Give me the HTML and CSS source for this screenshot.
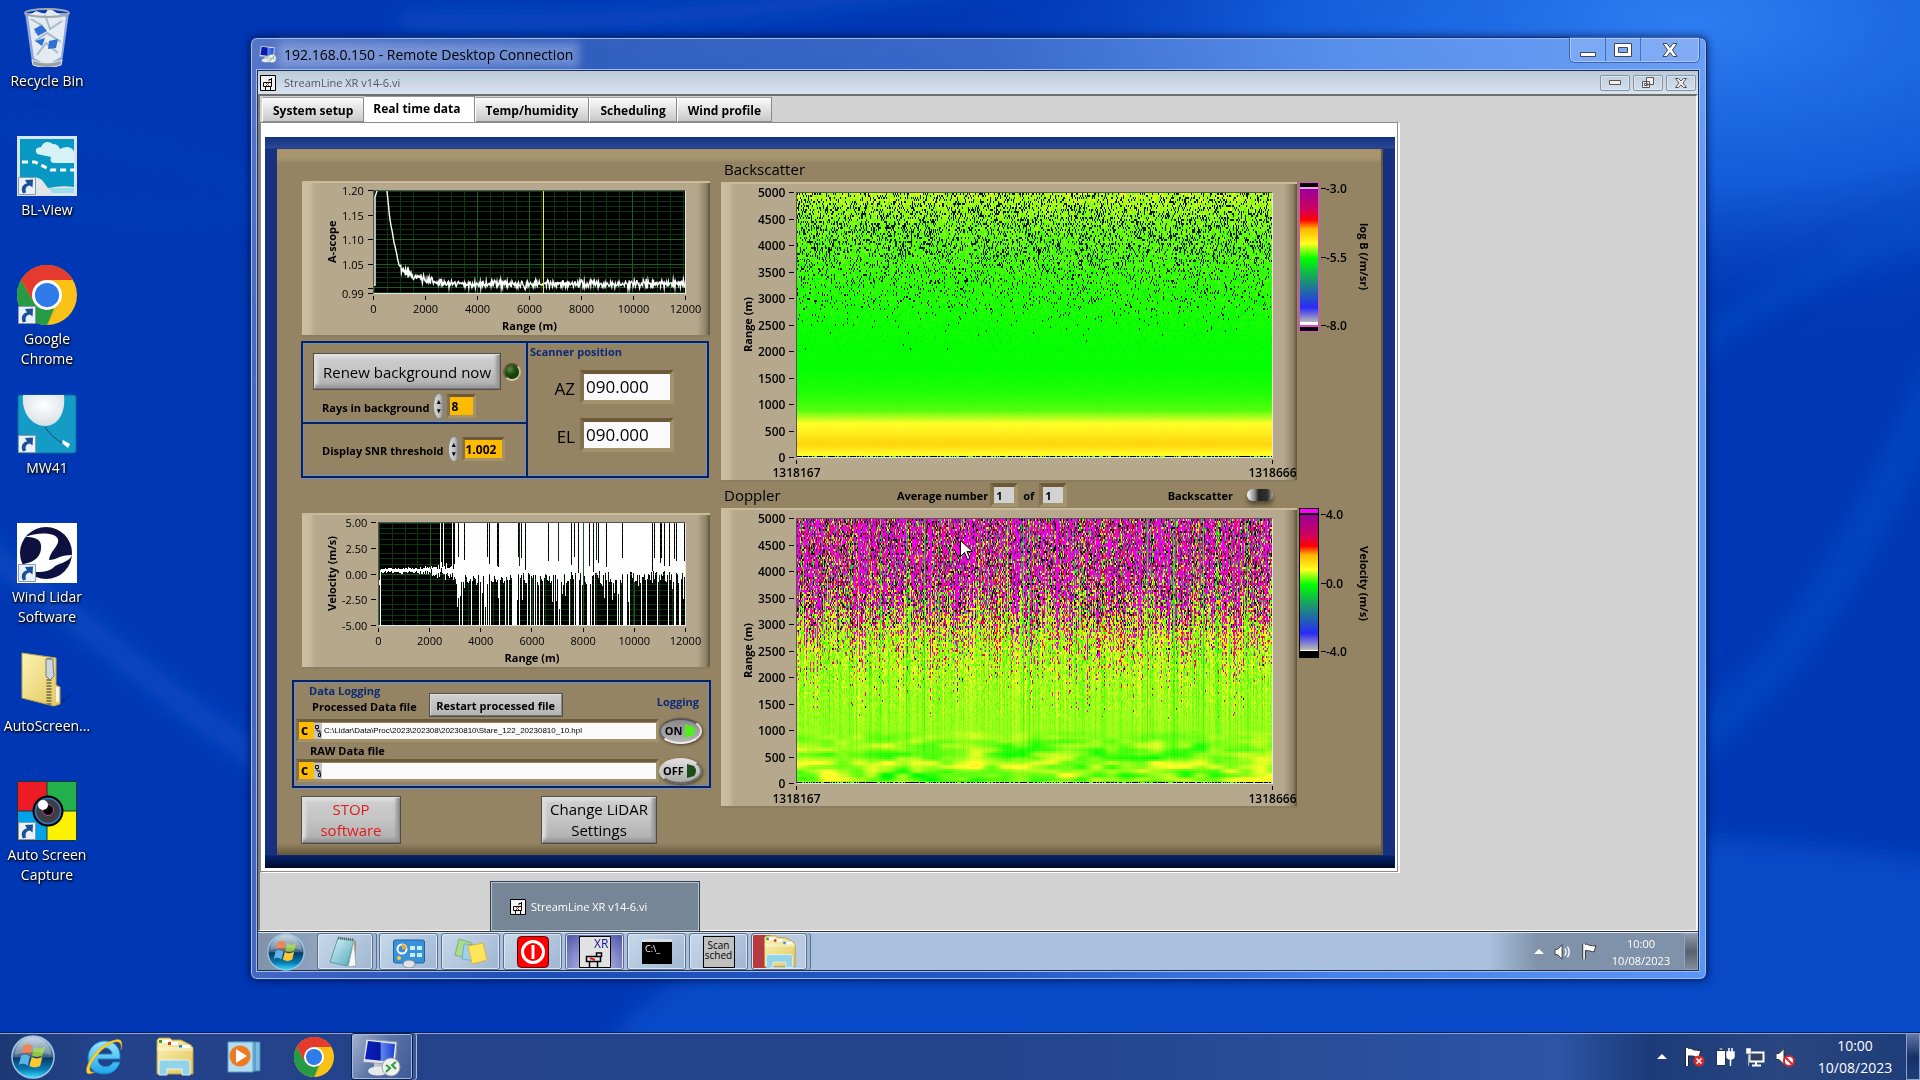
FILE: index.html
```html
<!DOCTYPE html>
<html lang="en">
<head>
    <meta charset="UTF-8">
    <meta name="viewport" content="width=device-width, initial-scale=1.0">
    <title>192.168.0.150 - Remote Desktop Connection</title>
    <link rel="stylesheet" href="styles.css">
</head>
<body>
    <!-- shared icon shapes -->
    <svg class="sprite" aria-hidden="true">
        <defs>
            <linearGradient id="folder" x1="0" y1="0" x2="1" y2="1">
                <stop offset="0" stop-color="#fbf3b4"/><stop offset="1" stop-color="#e3c65c"/>
            </linearGradient>
            <linearGradient id="orbTop" x1="0" y1="0" x2="0" y2="1">
                <stop offset="0" stop-color="#c3d3e0"/><stop offset=".5" stop-color="#3e6286"/><stop offset=".52" stop-color="#053a66"/><stop offset=".8" stop-color="#0b7db4"/><stop offset="1" stop-color="#35e2ff"/>
            </linearGradient>
            <linearGradient id="screen" x1="0" y1="0" x2="1" y2="0">
                <stop offset="0" stop-color="#0a1fc4"/><stop offset=".5" stop-color="#0518a0"/><stop offset=".55" stop-color="#5c86f0"/><stop offset="1" stop-color="#1c3cd0"/>
            </linearGradient>
            <linearGradient id="ieBlue" x1="0" y1="0" x2="0" y2="1">
                <stop offset="0" stop-color="#9ae6fd"/><stop offset="1" stop-color="#1ea5ea"/>
            </linearGradient>
            <linearGradient id="glassy" x1="0" y1="0" x2="1" y2="1">
                <stop offset="0" stop-color="#dff4f8"/><stop offset="1" stop-color="#4ea9bd"/>
            </linearGradient>
            <radialGradient id="balloon" cx=".5" cy=".35" r=".6">
                <stop offset="0" stop-color="#fff"/><stop offset="1" stop-color="#d9e2e6"/>
            </radialGradient>
        </defs>
        <symbol id="i-shortcut" viewBox="0 0 18 18">
            <path d="M.5.5h17v17H.5z" fill="#e6f1fb" stroke="#8b9aa8"/>
            <path d="M5 16.500C2 11 5 7 9 6.500L7 3l8-.5-.5 8-2.500-2C8 9 7 11.500 8 15.500z" fill="#1d4f96"/>
        </symbol>
        <symbol id="i-chrome" viewBox="0 0 48 48">
            <circle cx="24" cy="24" r="24" fill="#fbc116"/>
            <path d="M24 24 3.200 12A24 24 0 0 1 44.800 12H24z" fill="#e53a2e"/>
            <path d="M3.200 12A24 24 0 0 0 24 48L34.400 30 24 24 13.600 30z" fill="#269a44"/>
            <path d="M3.200 12 13.600 30 24 24V12z" fill="#e53a2e"/>
            <path d="M24 48 34.400 30V24z" fill="#fbc116"/>
            <circle cx="24" cy="24" r="12" fill="#fff"/>
            <circle cx="24" cy="24" r="9.700" fill="#2f7bea"/>
        </symbol>
        <symbol id="i-start" viewBox="0 0 44 44">
            <circle cx="22" cy="22" r="21" fill="url(#orbTop)" stroke="#9cc4e4" stroke-width="1.500"/>
            <path d="M12.500 10.500c3-2 6-1.500 9 .5l-2 8.500c-3-2-6-2.500-9-.5z" fill="#e8632a"/>
            <path d="M23 11.800c3.500 2 7 2 11-.3l-2.200 8.500c-3.500 2.200-7.500 2.200-10.800.2z" fill="#8fc63d"/>
            <path d="M10 21c3-2 6-1.500 9 .5l-2.200 9c-3-2-6-2.500-9-.5z" fill="#5cb4ea"/>
            <path d="M20.600 22c3.500 2 7 2 10.800-.2l-2.200 9c-3.500 2-7.500 2-10.800 0z" fill="#fdc92f"/>
            <path d="M4 20a18 17 0 0 1 36 0c-10-4-26-4-36 0z" fill="#fff" opacity=".22"/>
        </symbol>
        <symbol id="i-explorer" viewBox="0 0 40 40">
            <path d="M3 3l2-2h11l2 2h9l10 5 2 3v26H3z" fill="url(#folder)" stroke="#b39a42"/>
            <path d="M6 3h9v3H6zM15 5h9v3h-9zM25 8h11v3H25z" fill="#fff"/>
            <path d="M5 3h3v3H5z" fill="#3a9c36"/><path d="M14 5h3v3h-3z" fill="#d0392b"/><path d="M25 8h3v3h-3z" fill="#2f7fd6"/>
            <path d="M3 10h36v4H3z" fill="#fff" opacity=".35"/>
            <path d="M5 38V26q0-3 3-3h25q3 0 3 3v12h-8v-6H13v6z" fill="#8fd3ee" stroke="#e4f6fd" opacity=".95"/>
        </symbol>
        <symbol id="i-rdp" viewBox="0 0 40 40">
            <path d="M4 2l31 3-2 23L1 25z" fill="#dfe4ea" stroke="#8d97a5"/>
            <path d="M6 4l27 3-2 18L3 22z" fill="url(#screen)"/>
            <path d="M12 26l9 1-1 5-8-1z" fill="#bcc4cc"/><ellipse cx="16" cy="34" rx="10" ry="4.500" fill="#e6e9ec"/>
            <circle cx="29" cy="30" r="9" fill="#eef1ee" stroke="#9aa39a"/>
            <path d="M24 28l4 3-4 4M34 25l-4 3 4 4" fill="none" stroke="#2f9a3e" stroke-width="2"/>
        </symbol>
        <symbol id="i-vi" viewBox="0 0 16 16">
            <path d="M.5.5h15v15H.5z" fill="#f2f2f2" stroke="#000"/>
            <path d="M3.500 7.500h8v4h-8zM5.500 12v3M10.500 12v3M9 6V4.500h3M11.500 3v7" fill="none" stroke="#000"/>
            <path d="M6 8l3 3M9 8l-3 3" stroke="#d22"/>
        </symbol>
        <symbol id="i-tree" viewBox="0 0 8 16">
            <path d="M0 0h8v16H0z" fill="#c4c4c4"/><path d="M1.500 2.500h3v3h-3zM4.500 10.500h2v3h-2zM3 6v2h3v2" fill="none" stroke="#111"/>
        </symbol>
        <symbol id="i-flag" viewBox="0 0 18 20">
            <path d="M2 1v18" stroke="#222" stroke-width="4"/><path d="M2 2c4-2 5 1 8 1s3 1 6 0l-2 7c-4 1-4-1-7-1H2z" fill="#fff" stroke="#222"/><path d="M2 1v18" stroke="#fff" stroke-width="2"/>
        </symbol>
        <symbol id="i-speaker" viewBox="0 0 18 18">
            <path d="M1 6h3l5-5v16l-5-5H1z" fill="#fff" stroke="#333"/>
        </symbol>
    </svg>

    <svg class="wallpaper" viewBox="0 0 1920 1080" preserveAspectRatio="none" aria-hidden="true">
        <defs>
            <radialGradient id="glow"><stop offset="0" stop-color="#2f7df2"/><stop offset=".5" stop-color="#1968e6" stop-opacity=".75"/><stop offset="1" stop-color="#0038b6" stop-opacity="0"/></radialGradient>
            <filter id="soft" x="-20%" y="-20%" width="140%" height="140%"><feGaussianBlur stdDeviation="12"/></filter>
        </defs>
        <rect width="1920" height="1080" fill="#0037b4"/>
        <ellipse cx="1690" cy="20" rx="800" ry="330" fill="url(#glow)"/>
        <ellipse cx="1500" cy="1080" rx="900" ry="250" fill="#0a56d4" opacity=".6" filter="url(#soft)"/>
        <g filter="url(#soft)" fill="none" stroke="#0c58cf">
            <path d="M-50 530C60 590 150 700 400 850" stroke-width="24" opacity=".6"/>
            <path d="M0 130c100 0 180 30 300 70M60 205c90 10 140 12 240 10" stroke-width="10" opacity=".35"/>
            <path d="M400 20C700 30 900 -10 1100 -40" stroke-width="20" opacity=".6"/>
            <path d="M1660 760C1780 700 1860 560 1960 330" stroke-width="40" opacity=".4"/>
            <path d="M1650 380C1760 300 1860 240 1960 220" stroke-width="24" opacity=".4"/>
        </g>
    </svg>

    <main class="desktop">
        <nav class="shortcuts" aria-label="Desktop">
            <a class="shortcut" href="#">
                <svg viewBox="0 0 48 60" width="48" height="60"><path d="M2 6h44l-7 50q-15 5-30 0z" fill="#b9cbe8" opacity=".75"/><path d="M5 9l8-5 9 3 4-6 8 5 9 4-5 40-14 8-13-7z" fill="#e4ebf2"/><path d="M8 12l10 6-6 8M22 8l5 14 12-8M12 34l12-8 14 9M14 48l9-12 12 10" fill="none" stroke="#a9bacb" stroke-width="2"/><path d="M11 22l8-4 5 6-9 5zM12 34l10-3-3 8zM26 34l9-2-2 9-8 1z" fill="#2c6fd6"/><ellipse cx="24" cy="6" rx="22" ry="4" fill="none" stroke="#a3a8ad" stroke-width="2"/><path d="M9 53q15 6 30 0l-1 5q-14 5-28 0z" fill="#9ba0a5" stroke="#e8e8e8"/></svg>
                <span>Recycle Bin</span>
            </a>
            <a class="shortcut" href="#">
                <svg viewBox="0 0 60 60" width="60" height="60"><path d="M0 0h60v60H0z" fill="#d5e6ec"/><path d="M3 3h54v54H3z" fill="#0798c4"/><path d="M20 18q-4-6 4-7 4-8 12-3 5 0 7 5 9-5 14 2v12H38q-6 0-4-6z" fill="#d6f2f7"/><path d="M5 26h13l16 8h24" fill="none" stroke="#fff" stroke-width="3" stroke-dasharray="6 4"/><path d="M3 44q14-6 22 0l6 8q14-3 26-1v6H3z" fill="#e3e6e8"/><path d="M31 52h26v5H35z" fill="#9fdceb"/><use href="#i-shortcut" x="1" y="41" width="18" height="18"/></svg>
                <span>BL-View</span>
            </a>
            <a class="shortcut" href="#">
                <svg viewBox="0 0 60 60" width="60" height="60"><use href="#i-chrome" width="60" height="60"/><use href="#i-shortcut" x="1" y="41" width="18" height="18"/></svg>
                <span>Google Chrome</span>
            </a>
            <a class="shortcut" href="#">
                <svg viewBox="0 0 60 60" width="60" height="60"><rect x="1" y="1" width="58" height="58" rx="2" fill="#149cc6" stroke="#0b6a9a"/><path d="M6 1C4 20 16 32 28 32S49 20 47 1z" fill="url(#balloon)"/><path d="M28 33c4 7 11 12 17 16" fill="none" stroke="#0a4a66"/><path d="M46 46l7 4-2 4-6-5z" fill="#fff"/><use href="#i-shortcut" x="1" y="41" width="18" height="18"/></svg>
                <span>MW41</span>
            </a>
            <a class="shortcut" href="#">
                <svg viewBox="0 0 60 60" width="60" height="60"><path d="M0 0h60v60H0z" fill="#fff"/><circle cx="29" cy="30" r="26" fill="#0e1040"/><path d="M8 14C20 9 38 9 41 16c2 6-8 12-9 21 8 0 10-5 23-5-3 8-15 8-19 13-6 5-17 5-29 2V41c10-2 18-7 17-19-1-7-8-8-16-8z" fill="#fff"/><use href="#i-shortcut" x="1" y="41" width="18" height="18"/></svg>
                <span>Wind Lidar Software</span>
            </a>
            <a class="shortcut" href="#">
                <svg viewBox="0 0 60 60" width="60" height="60"><path d="M38 52l20-13-14 14z" fill="#012a86" opacity=".6"/><path d="M5 1l34 5v27l4 2v17l-6 2L5 46z" fill="url(#folder)" stroke="#c2a748"/><path d="M32 6v47" stroke="#8a8150" stroke-width="5" stroke-dasharray="2 1"/><path d="M29 7h7v6l1 11-4 4-4-4z" fill="#cdd5de" stroke="#6f7a85"/><path d="M39 35h3v15h-3z" fill="#eef4f8"/></svg>
                <span>AutoScreen...</span>
            </a>
            <a class="shortcut" href="#">
                <svg viewBox="0 0 60 60" width="60" height="60"><path d="M0 0h30v30H0z" fill="#ed1c24"/><path d="M30 0h30v30H30z" fill="#22b14c"/><path d="M0 30h30v30H0z" fill="#00a2e8"/><path d="M30 30h30v30H30z" fill="#fff200"/><path d="M.5.5h59v59H.5zM30 0v60M0 30h60" fill="none" stroke="#233"/><circle cx="31" cy="30" r="14.500" fill="#3d3d42" stroke="#000" stroke-width="2"/><circle cx="31" cy="30" r="12.500" fill="none" stroke="#2f7cc4" stroke-width="1.500"/><circle cx="31" cy="29" r="5.500" fill="#000" stroke="#b04ab4"/><circle cx="26" cy="24" r="5" fill="#fff"/><use href="#i-shortcut" x="1" y="41" width="18" height="18"/></svg>
                <span>Auto Screen Capture</span>
            </a>
        </nav>

        <section class="window" aria-label="Remote Desktop Connection">
            <header class="window-title">
                <svg width="18" height="18"><use href="#i-rdp"/></svg>
                <span>192.168.0.150 - Remote Desktop Connection</span>
                <div class="window-controls">
                    <button aria-label="Minimize"><svg width="18" height="16"><path d="M1.500 10.500h15v4h-15z" fill="#fff" stroke="#445"/></svg></button>
                    <button aria-label="Maximize"><svg width="18" height="14"><path d="M.5.5h17v13H.5zM4.500 4.500v5h9v-5z" fill="#fff" fill-rule="evenodd" stroke="#445"/></svg></button>
                    <button class="wide" aria-label="Close"><svg width="16" height="14"><path d="M1 .5h4l3 4 3-4h4l-4.500 6.500 4.500 6.500h-4l-3-4-3 4H1l4.500-6.500z" fill="#fff" stroke="#445"/></svg></button>
                </div>
            </header>

            <div class="client">
                <div class="vi-title">
                    <svg width="16" height="16"><use href="#i-vi"/></svg>
                    <span>StreamLine XR v14-6.vi</span>
                    <div class="vi-controls">
                        <button aria-label="Minimize vi"><svg width="12" height="6"><path d="M.5.5h11v4H.5z" fill="#eee" stroke="#555"/></svg></button>
                        <button aria-label="Restore vi"><svg width="12" height="12"><path d="M4.500.5h7v7h-7zM.5 4.500h7v6h-7z" fill="#eee" stroke="#555"/><path d="M2.500 6.500h3v2h-3z" fill="none" stroke="#555"/></svg></button>
                        <button aria-label="Close vi"><svg width="12" height="10"><path d="M.5.500h3l2.500 2.500L8.500.5h3L8 5l3.500 4.500h-3L6 7 3.500 9.500h-3L4 5z" fill="#eee" stroke="#555"/></svg></button>
                    </div>
                </div>

                <div class="mdi">
                    <div class="tabs" role="tablist">
                        <button role="tab">System setup</button>
                        <button role="tab" class="active">Real time data</button>
                        <button role="tab">Temp/humidity</button>
                        <button role="tab">Scheduling</button>
                        <button role="tab">Wind profile</button>
                    </div>
                    <div class="tab-page">
                        <div class="frame">
                            <div class="panel">
                                <div class="left">
                                    <div class="graph ascope">
                                        <div class="y-title">A-scope</div>
                                        <ul class="y-ticks"><li>1.20</li><li>1.15</li><li>1.10</li><li>1.05</li><li></li><li>0.99</li></ul>
                                        <canvas id="ascope" width="314" height="104" role="img" aria-label="A-scope"></canvas>
                                        <ul class="x-ticks"><li>0</li><li>2000</li><li>4000</li><li>6000</li><li>8000</li><li>10000</li><li>12000</li></ul>
                                        <div class="x-title">Range (m)</div>
                                    </div>

                                    <div class="settings">
                                        <div class="settings-col">
                                            <div class="cell">
                                                <div class="line"><button class="big">Renew background now</button><i class="led"></i></div>
                                                <div class="line">
                                                    <label for="rays">Rays in background</label>
                                                    <button class="spin" aria-label="Change rays">&#9652;<br>&#9662;</button>
                                                    <input class="num short" id="rays" value="8">
                                                </div>
                                            </div>
                                            <div class="cell">
                                                <div class="line">
                                                    <label for="snr">Display SNR threshold</label>
                                                    <button class="spin" aria-label="Change threshold">&#9652;<br>&#9662;</button>
                                                    <input class="num" id="snr" value="1.002">
                                                </div>
                                            </div>
                                        </div>
                                        <div class="scanner">
                                            <h2>Scanner position</h2>
                                            <div class="pos"><label for="az">AZ</label><input id="az" value="090.000"></div>
                                            <div class="pos"><label for="el">EL</label><input id="el" value="090.000"></div>
                                        </div>
                                    </div>

                                    <div class="graph velocity">
                                        <div class="y-title">Velocity (m/s)</div>
                                        <ul class="y-ticks"><li>5.00</li><li>2.50</li><li>0.00</li><li>-2.50</li><li>-5.00</li></ul>
                                        <canvas id="velocity" width="308" height="104" role="img" aria-label="Velocity"></canvas>
                                        <ul class="x-ticks"><li>0</li><li>2000</li><li>4000</li><li>6000</li><li>8000</li><li>10000</li><li>12000</li></ul>
                                        <div class="x-title">Range (m)</div>
                                    </div>

                                    <div class="logging">
                                        <div class="logging-head">
                                            <div>
                                                <h2>Data Logging</h2>
                                                <label for="proc">Processed Data file</label>
                                            </div>
                                            <button>Restart processed file</button>
                                            <h2 class="right">Logging</h2>
                                        </div>
                                        <div class="path">
                                            <div class="path-box"><b>C</b><svg width="8" height="16"><use href="#i-tree"/></svg><input id="proc" value="C:\Lidar\Data\Proc\2023\202308\20230810\Stare_122_20230810_10.hpl"></div>
                                            <button class="oval on">ON<svg width="12" height="14"><path d="M1 0l9 3q2 4 0 8l-9 3z" fill="#4ff01a"/></svg></button>
                                        </div>
                                        <label class="raw" for="raw">RAW Data file</label>
                                        <div class="path">
                                            <div class="path-box"><b>C</b><svg width="8" height="16"><use href="#i-tree"/></svg><input id="raw" value=""></div>
                                            <button class="oval">OFF<svg width="12" height="14"><path d="M1 0l7 2q4 5 0 10l-7 2z" fill="#1d4d18"/></svg></button>
                                        </div>
                                    </div>

                                    <div class="actions">
                                        <button class="big stop">STOP<br>software</button>
                                        <button class="big">Change LiDAR<br>Settings</button>
                                    </div>
                                </div>

                                <div class="right-side">
                                    <h3>Backscatter</h3>
                                    <div class="map-row">
                                        <div class="graph map">
                                            <div class="y-title">Range (m)</div>
                                            <ul class="y-ticks"><li>5000</li><li>4500</li><li>4000</li><li>3500</li><li>3000</li><li>2500</li><li>2000</li><li>1500</li><li>1000</li><li>500</li><li>0</li></ul>
                                            <canvas id="backscatter" width="477" height="266" role="img" aria-label="Backscatter"></canvas>
                                            <ul class="x-ticks"><li>1318167</li><li>1318666</li></ul>
                                        </div>
                                        <div class="scale">
                                            <div class="ramp pink"></div>
                                            <ul><li>-3.0</li><li>-5.5</li><li>-8.0</li></ul>
                                            <div class="scale-title">log B (/m/sr)</div>
                                        </div>
                                    </div>
                                    <div class="map-head">
                                        <h3>Doppler</h3>
                                        <label for="avg">Average number</label><input id="avg" value="1">
                                        <label for="avg-of">of</label><input id="avg-of" value="1">
                                        <span class="toggle-label" id="toggle-label">Backscatter</span>
                                        <button class="toggle" role="switch" aria-checked="false" aria-labelledby="toggle-label"></button>
                                    </div>
                                    <div class="map-row">
                                        <div class="graph map">
                                            <div class="y-title">Range (m)</div>
                                            <ul class="y-ticks"><li>5000</li><li>4500</li><li>4000</li><li>3500</li><li>3000</li><li>2500</li><li>2000</li><li>1500</li><li>1000</li><li>500</li><li>0</li></ul>
                                            <canvas id="doppler" width="477" height="266" role="img" aria-label="Doppler"></canvas>
                                            <ul class="x-ticks"><li>1318167</li><li>1318666</li></ul>
                                        </div>
                                        <div class="scale">
                                            <div class="ramp"></div>
                                            <ul><li>4.0</li><li>0.0</li><li>-4.0</li></ul>
                                            <div class="scale-title">Velocity (m/s)</div>
                                        </div>
                                    </div>
                                </div>
                            </div>
                        </div>
                    </div>
                </div>

                <div class="remote-bar">
                    <button class="orb" aria-label="Remote start"><svg width="38" height="38"><use href="#i-start"/></svg></button>
                    <button class="task stacked" aria-label="Notepad"><svg width="32" height="34" viewBox="0 0 32 34"><path d="M11 3l16 3v26l-9-2z" fill="#a98d57"/><path d="M9 3l16 2-7 26L1 27z" fill="url(#glassy)" stroke="#5a99a8"/><path d="M25 5l2 26-8 1z" fill="#f4f7f8" stroke="#9ab"/><path d="M9 3l16 2" stroke="#566" stroke-width="3" stroke-dasharray="1 1"/></svg></button>
                    <button class="task" aria-label="Control panel"><svg width="32" height="32" viewBox="0 0 32 32"><rect x=".5" y="4" width="31" height="23" rx="2" fill="#3792da" stroke="#1e62a4"/><circle cx="9" cy="13" r="4.500" fill="none" stroke="#fff" stroke-width="2"/><path d="M9 8a5 5 0 0 1 5 5H9z" fill="#f5a623"/><path d="M17 10h5v4h-5zM24 10h5v4h-5zM17 17h5v4h-5zM24 17h5v4h-5z" fill="#c9ecff"/><circle cx="6" cy="22" r="2" fill="#fc3"/><ellipse cx="16" cy="28" rx="6" ry="4" fill="#dfe3e6" stroke="#889"/></svg></button>
                    <button class="task" aria-label="Sticky notes"><svg width="34" height="30" viewBox="0 0 34 30"><path d="M5 2l13 4-4 16L1 18z" fill="#a9dc8d" stroke="#7bb868"/><path d="M10 7l14 1-2 16-14-2z" fill="#9fd0ee" stroke="#74acd2"/><path d="M14 9l15-3 4 17-15 4z" fill="#fce45c" stroke="#d6b93a"/></svg></button>
                    <button class="task" aria-label="Shutdown"><svg width="32" height="32" viewBox="0 0 32 32"><rect x=".5" y=".5" width="31" height="31" rx="4" fill="#f00" stroke="#500"/><circle cx="16" cy="16" r="10.500" fill="none" stroke="#fff" stroke-width="3"/><path d="M16 9v14" stroke="#fff" stroke-width="3"/></svg></button>
                    <button class="task running" aria-label="StreamLine XR"><svg width="32" height="32" viewBox="0 0 32 32"><path d="M.5.5h31v31H.5z" fill="#e2e2e2" stroke="#000"/><text x="15" y="12" font-size="12" fill="#119">XR</text><path d="M7.500 20.500h14v5h-14zM10.500 26v5M18.500 26v5M17.500 20v-3h5v4" fill="none" stroke="#000" stroke-width="1.500"/><path d="M11 22l5 2" stroke="#d22" stroke-width="2"/></svg></button>
                    <button class="task" aria-label="Command prompt"><svg width="30" height="26" viewBox="0 0 30 26"><path d="M0 0h30v25H0z" fill="#000"/><path d="M0 0h30v3H0z" fill="#d8dde2"/><text x="3" y="13" font-size="9" fill="#fff">C:\_</text></svg></button>
                    <button class="task"><span class="scan">Scan sched</span></button>
                    <button class="task stacked alert" aria-label="Remote explorer"><svg width="34" height="34"><use href="#i-explorer"/></svg></button>
                    <div class="tray small">
                        <svg width="10" height="6"><path d="M0 5l5-5 5 5z" fill="#fff"/></svg>
                        <svg width="18" height="16" viewBox="0 0 20 18"><use href="#i-speaker" width="18" height="18"/><path d="M12 5q3 4 0 8M15 3q4 6 0 12" fill="none" stroke="#fff" stroke-width="1.500"/></svg>
                        <svg width="16" height="17"><use href="#i-flag"/></svg>
                        <time>10:00<br>10/08/2023</time>
                        <button class="peek" aria-label="Show remote desktop"></button>
                    </div>
                </div>

                <div class="preview"><svg width="16" height="16"><use href="#i-vi"/></svg>StreamLine XR v14-6.vi</div>
            </div>
        </section>

        <svg class="pointer" width="13" height="21" aria-hidden="true"><path d="M.5.5v16l4-4 3 7 2.500-1-3-7h5.500z" fill="#fff" stroke="#000"/></svg>
    </main>

    <footer class="taskbar">
        <button class="orb" aria-label="Start"><svg width="44" height="44"><use href="#i-start"/></svg></button>
        <button class="pin" aria-label="Internet Explorer"><svg width="40" height="40" viewBox="0 0 40 40"><path d="M21 4c10 0 16 7 15 18H14c0 9 12 10 15 3h7c-3 9-9 12-16 12C9 37 4 30 4 21S11 4 21 4zm-7 13h14c-1-8-13-8-14 0z" fill="url(#ieBlue)" stroke="#1583c4"/><path d="M37 13c2-7 1-12-6-10C20 5 7 18 3 30c-2 8 2 8 8 5C5 36 5 32 7 27 12 17 23 7 31 5c5-1 7 2 6 8z" fill="#fbd22e" stroke="#c99b12" stroke-width=".5"/></svg></button>
        <button class="pin" aria-label="Windows Explorer"><svg width="40" height="40"><use href="#i-explorer"/></svg></button>
        <button class="pin" aria-label="Media Player"><svg width="34" height="34" viewBox="0 0 34 34"><path d="M6 2h27v29H10z" fill="#7cbde0" stroke="#3e84b4"/><path d="M28 2v30" stroke="#3e84b4"/><path d="M1 2h25v30H1z" fill="#b2dcf0" stroke="#5c9cc4"/><circle cx="13" cy="16" r="10.500" fill="#ef7a22"/><path d="M9 9l11 7-11 7z" fill="#fff"/></svg></button>
        <button class="pin" aria-label="Chrome"><svg width="40" height="40"><use href="#i-chrome"/></svg></button>
        <button class="pin open" aria-label="Remote Desktop"><svg width="40" height="40"><use href="#i-rdp"/></svg></button>
        <div class="tray">
            <svg class="more" width="10" height="6"><path d="M0 5l5-5 5 5z" fill="#fff"/></svg>
            <svg width="20" height="20"><use href="#i-flag" width="18" height="20"/><circle cx="14" cy="14" r="5.500" fill="#d8282c"/><path d="M11.500 11.500l5 5m0-5l-5 5" stroke="#fff" stroke-width="1.500"/></svg>
            <svg width="20" height="20"><path d="M1.500 3.500h9v15h-9zM4 1h4v2H4z" fill="#fff" stroke="#23324f"/><path d="M12 5h7v4q0 3-3.500 3T12 9zM14 1v5M17 1v5M15.500 12v7" fill="#fff" stroke="#fff" stroke-width="1.500"/></svg>
            <svg width="20" height="20"><path d="M4.500 5.500h14v9h-14z" fill="#33415e" stroke="#fff" stroke-width="2"/><path d="M11 15v3M7 18.500h9" stroke="#fff" stroke-width="2"/><path d="M1 1h5v6H1zM3 7v12h1V7z" fill="#fff" stroke="#456" stroke-width=".5"/></svg>
            <svg width="20" height="20"><use href="#i-speaker" width="18" height="19"/><circle cx="14" cy="14" r="5" fill="#fff" stroke="#d8282c" stroke-width="2"/><path d="M10.500 10.500l7 7" stroke="#d8282c" stroke-width="2"/></svg>
            <time>10:00<br>10/08/2023</time>
            <button class="peek" aria-label="Show desktop"></button>
        </div>
    </footer>

    <script src="plots.js"></script>
</body>
</html>
```
FILE: styles.css
```css
* {
    box-sizing: border-box;
}

body {
    margin: 0;
    height: 100vh;
    overflow: hidden;
    display: flex;
    flex-direction: column;
    font-family: "Open Sans", "Noto Sans", sans-serif;
    font-size: 11px;
    color: #000;
    background: #0037b4;
}

button, input {
    font: inherit;
    color: inherit;
    padding: 0;
    margin: 0;
    border: 0;
    border-radius: 0;
    background: none;
    min-width: 0;
}

ul {
    list-style: none;
    margin: 0;
    padding: 0;
}

h2, h3 {
    margin: 0;
}

svg {
    flex: none;
}

.sprite {
    position: absolute;
    width: 0;
    height: 0;
}

.wallpaper {
    position: absolute;
    width: 100%;
    height: 100%;
    z-index: -1;
}

.desktop {
    flex: 1;
    position: relative;
}

/* desktop icons */
.shortcuts {
    width: 94px;
    padding-top: 7px;
}

.shortcut {
    display: flex;
    flex-direction: column;
    align-items: center;
    gap: 4px;
    height: 129px;
    color: #fff;
    font-size: 14px;
    line-height: 20px;
    text-align: center;
    text-decoration: none;
    text-shadow: 1px 1px 2px #000, 0 1px 3px #000;
}

/* remote desktop window */
.window {
    position: absolute;
    left: 250px;
    right: 213px;
    top: 37px;
    bottom: 52px;
    display: flex;
    flex-direction: column;
    padding: 0 7px 8px 6px;
    border: 1px solid #0b2f77;
    border-radius: 7px;
    background: linear-gradient(rgba(255, 255, 255, 0.1), transparent 40%), linear-gradient(90deg, #4468c2, #1b4db6 20%, #2358c4 50%, #4683ea 75%, #5b95f4);
    box-shadow: inset 0 0 0 1px #9fbcf2, 0 0 8px rgba(0, 0, 40, 0.7);
}

.window-title {
    height: 32px;
    display: flex;
    align-items: center;
    gap: 7px;
    padding-left: 2px;
    font-size: 14px;
}

.window-title > span {
    margin-top: 2px;
    background: rgba(190, 205, 240, 0.4);
    box-shadow: 0 0 8px 6px rgba(190, 205, 240, 0.4);
    line-height: 14px;
}

.window-controls {
    display: flex;
    align-self: flex-start;
    margin-left: auto;
    border: 1px solid #a9c8ff;
    border-top: 0;
    border-radius: 0 0 5px 5px;
    box-shadow: 0 0 0 1px #3b64b4;
}

.window-controls button {
    width: 35px;
    height: 23px;
    display: flex;
    align-items: center;
    justify-content: center;
    background: rgba(255, 255, 255, 0.15);
    border-right: 1px solid #3f6fc6;
}

.window-controls .wide {
    width: 57px;
    border: 0;
}

.client {
    flex: 1;
    min-height: 0;
    position: relative;
    display: flex;
    flex-direction: column;
    border: 1px solid #20304c;
    box-shadow: 0 0 0 1px #9fbcf2;
    background: #d2d2d2;
}

.vi-title {
    display: flex;
    align-items: center;
    height: 23px;
    gap: 8px;
    padding: 0 2px;
    background: linear-gradient(#bccad8, #d8e3f0);
    color: #4c5866;
}

.vi-controls {
    margin-left: auto;
    display: flex;
    gap: 3px;
}

.vi-controls button {
    width: 30px;
    height: 16px;
    display: flex;
    align-items: center;
    justify-content: center;
    border: 1px solid #8492a3;
    border-radius: 2px;
    box-shadow: inset 0 0 0 1px #dfe8f2;
}

.mdi {
    flex: 1;
    min-height: 0;
    border-top: 2px solid #6d6d6d;
    border-left: 2px solid #7d7d7d;
    border-right: 2px solid #f4f4f4;
    border-bottom: 1px solid #fff;
    background: #d2d2d2;
    overflow: hidden;
}

/* tabs */
.tabs {
    display: flex;
    align-items: flex-end;
    height: 26px;
    padding-left: 2px;
}

.tabs button {
    height: 25px;
    padding: 1px 10px 0;
    border: 1px solid #8a8a8a;
    border-left-color: #fff;
    border-top-color: #999;
    background: linear-gradient(#fbfbfb, #e4e4e4 45%, #c9c9c9);
    font-weight: bold;
    font-size: 12px;
}

.tabs .active {
    height: 26px;
    padding: 0 13px 2px 8px;
    background: #fff;
    border-bottom-color: #fff;
}

.tab-page {
    width: fit-content;
    padding: 14px 2px 3px 4px;
    background: #fff;
    border: 1px solid #8a8a8a;
    box-shadow: 2px 1px 0 #fff;
}

.frame {
    padding: 12px 12px 13px;
    background: linear-gradient(#14307f, #2a4898 11px, transparent 12px), linear-gradient(0deg, #000a2c, #04236a 12px, transparent 13px), #17307f;
}

.panel {
    display: flex;
    gap: 9px;
    height: 706px;
    padding: 8px 8px 0 15px;
    background: linear-gradient(#ad946c, #a5966f 9px, #948463 14px, transparent 15px), linear-gradient(0deg, #65573a, transparent 12px), #948463;
    box-shadow: inset -2px 0 1px #64583f;
}

/* graphs */
.graph {
    display: grid;
    grid-template-rows: 104px 24px auto;
    grid-template-columns: 20px 31px 1fr;
    align-content: start;
    padding: 9px 24px 0 20px;
    background: linear-gradient(90deg, #cdbfa2, #c7b99b 8px, #b6a88c 13px, transparent 14px), linear-gradient(270deg, #5d543e, #8f8368 4px, #b6a88c 13px), #b6a88c;
    box-shadow: inset 0 2px 0 #c9bb9c, inset 0 -2px 0 #8a7d60;
}

.graph canvas {
    display: block;
    width: 100%;
    height: 100%;
    image-rendering: pixelated;
    border: 1px solid #e6e6e0;
    border-top-color: #555;
    border-left-color: #555;
}

.ascope, .velocity {
    height: 156px;
    width: 408px;
    margin-left: 10px;
}

.velocity {
    grid-template-columns: 20px 36px 1fr;
    margin-top: 35px;
}

.y-title {
    writing-mode: vertical-rl;
    transform: rotate(180deg);
    font-weight: bold;
    text-align: center;
    line-height: 20px;
    white-space: nowrap;
    justify-self: center;
}

.y-ticks {
    display: grid;
    grid-template-rows: repeat(4, 1fr) 1px;
    line-height: 1px;
}

.ascope .y-ticks {
    grid-template-rows: repeat(4, 5fr) 1fr 1px;
}

.y-ticks li {
    display: flex;
    justify-content: flex-end;
    gap: 4px;
    padding-right: 2px;
    height: 1px;
}

.y-ticks li::after {
    content: "";
    width: 5px;
    height: 1px;
    background: #000;
}

.x-ticks {
    grid-column: 3;
    display: flex;
    justify-content: space-between;
    padding-top: 2px;
}

.x-ticks li {
    width: 1px;
    display: flex;
    flex-direction: column;
    align-items: center;
    line-height: 13px;
}

.x-ticks li::before {
    content: "";
    width: 1px;
    height: 4px;
    margin-bottom: 2px;
    background: #000;
    flex: none;
}

.x-title {
    grid-column: 3;
    text-align: center;
    font-weight: bold;
    line-height: 15px;
}

.map {
    width: 576px;
    height: 300px;
    grid-template-columns: 20px 38px 1fr;
    grid-template-rows: 266px 24px;
    padding-top: 10px;
    padding-left: 17px;
}

.map .y-ticks {
    grid-template-rows: repeat(10, 1fr) 1px;
}

.map .y-ticks, .map .x-ticks {
    font-size: 12px;
    font-weight: 600;
}

/* left column */
.left {
    width: 420px;
    padding-top: 24px;
}

.settings {
    display: flex;
    height: 137px;
    width: 408px;
    margin: 4px 0 0 9px;
    border: 2px solid #06215f;
    box-shadow: inset 0 0 0 1px #6f8ec6, 0 1px 0 #6f8ec6;
    font-weight: bold;
}

.settings-col {
    width: 225px;
    border-right: 2px solid #06215f;
}

.cell {
    height: 81px;
    padding: 10px 0 0 10px;
    border-bottom: 2px solid #06215f;
    box-shadow: inset 0 -1px 0 #6f8ec6, inset -1px 0 0 #6f8ec6;
}

.cell + .cell {
    height: 52px;
    padding-top: 12px;
    border: 0;
}

.line {
    display: flex;
    align-items: center;
    gap: 2px;
}

.line + .line {
    margin-top: 3px;
}

.line label {
    padding: 3px 2px 0 9px;
}

.big {
    height: 37px;
    width: 188px;
    border: 2px solid;
    border-color: #e2e2e2 #888 #777 #ddd;
    outline: 1px solid #4e4e4e;
    outline-offset: -1px;
    background: linear-gradient(#cfcfcf, #c4c4c4 50%, #adadad);
    box-shadow: inset -3px -3px 3px #999, inset 3px 3px 3px #ddd;
    font-size: 15px;
    font-weight: normal;
}

.led {
    width: 18px;
    height: 18px;
    border-radius: 50%;
    border: 2px solid #6d5d3c;
    border-color: #5a4a30 #c6b694 #d8c8a4 #6d5d3c;
    background: radial-gradient(circle at 35% 30%, #5d8a4a, #1c4a10 40%, #0c2c06);
}

.spin {
    width: 12px;
    height: 26px;
    border-radius: 50%;
    background: linear-gradient(90deg, #ddd, #bbb 60%, #777);
    border: 1px solid #888;
    font-size: 7px;
    line-height: 9px;
}

.num {
    width: 43px;
    height: 24px;
    padding-left: 1px;
    border: 3px solid #83714c;
    border-color: #6c5a38 #a3936d #a3936d #83714c;
    background: #fb0;
    font-size: 12px;
}

.num.short {
    width: 29px;
}

.scanner {
    flex: 1;
    padding: 1px 2px;
}

.settings h2, .logging h2 {
    color: #0c2a78;
    font-size: 11px;
    line-height: 15px;
}

.pos {
    display: flex;
    align-items: center;
    margin-top: 7px;
    height: 41px;
    font-size: 17px;
    font-weight: normal;
    gap: 5px;
}

.pos label {
    width: 45px;
    padding-top: 4px;
    text-align: right;
}

.pos input, .map-head input {
    width: 94px;
    height: 34px;
    padding-left: 2px;
    border: 4px solid #83714c;
    border-color: #6c5a38 #a3936d #a3936d #83714c;
    background: #fafafa;
}

.logging {
    width: 419px;
    height: 108px;
    margin-top: 11px;
    padding: 1px 7px 0 2px;
    border: 2px solid #06215f;
    box-shadow: inset 0 0 0 1px #6f8ec6, 0 1px 0 #6f8ec6;
    font-weight: bold;
}

.logging-head {
    display: flex;
    align-items: flex-end;
    height: 35px;
    padding-left: 13px;
    gap: 12px;
}

.logging-head label {
    line-height: 18px;
    padding: 0 0 2px 3px;
    display: block;
}

.logging-head button {
    width: 134px;
    height: 24px;
    margin-bottom: 1px;
    border: 2px solid;
    border-color: #e2e2e2 #888 #777 #ddd;
    outline: 1px solid #4e4e4e;
    outline-offset: -1px;
    background: linear-gradient(#cfcfcf, #b4b4b4);
}

.logging-head .right {
    align-self: center;
    margin: 2px 3px 0 auto;
}

.path {
    display: flex;
    align-items: center;
    height: 25px;
}

.path-box {
    flex: 1;
    display: flex;
    align-items: center;
    height: 23px;
    border: 3px solid #83714c;
    border-color: #6c5a38 #a3936d #a3936d #83714c;
}

.path-box b {
    width: 15px;
    height: 17px;
    line-height: 17px;
    padding-left: 2px;
    background: #fb0;
}

.path-box input {
    flex: 1;
    height: 16px;
    padding-left: 2px;
    background: #fafafa;
    font-family: "Liberation Sans", sans-serif;
    font-size: 8px;
    font-weight: normal;
}

.raw {
    display: block;
    padding-left: 14px;
    line-height: 15px;
}

.oval {
    width: 43px;
    height: 26px;
    border-radius: 50%;
    border: 2px solid #6b6b6b;
    border-color: #ddd #777 #666 #ccc;
    background: linear-gradient(#ddd, #aaa);
    box-shadow: 1px 1px 3px #4b3e22;
    display: flex;
    align-items: center;
    justify-content: center;
    gap: 2px;
}

.oval.on {
    background: linear-gradient(#8a8a8a, #b4b4b4);
    border-color: #555 #ddd #eee #666;
}

.actions {
    display: flex;
    justify-content: space-between;
    padding: 8px 55px 0 9px;
    line-height: 21px;
}

.actions .big {
    width: 116px;
    height: 48px;
}

.actions .stop {
    width: 100px;
    color: #e01b1b;
}

/* right column */
.right-side h3 {
    padding-left: 3px;
    font-size: 15px;
    font-weight: normal;
    line-height: 25px;
}

.map-row {
    display: flex;
    gap: 2px;
}

.map-head {
    display: flex;
    align-items: center;
    height: 26px;
    width: 576px;
    padding-right: 24px;
    gap: 2px;
    font-weight: bold;
}

.map-head h3 {
    width: 174px;
}

.map-head input {
    width: 28px;
    height: 24px;
    background: #d2d2d2;
}

.map-head input + label {
    padding: 0 3px;
}

.toggle-label {
    margin-left: auto;
    padding-right: 12px;
}

.toggle {
    width: 26px;
    height: 12px;
    border-radius: 6px;
    background: linear-gradient(90deg, #fff, #888 30%, #222 45%, #333 80%, #aaa);
    box-shadow: 0 4px 4px rgba(50, 40, 20, 0.6);
}

.scale {
    display: flex;
    height: 150px;
}

.ramp {
    width: 20px;
    border: 1px solid #000;
    background: linear-gradient(#f0f 4px, #000 4px, #000 6px, #9a009a 6px, #d0005c 18%, #f00 25%, #ffb400 31%, #ffff20 41%, #0f0 51%, #1a9a6a 65%, #2a2af8 84%, #b8b8b8 95%, #fff 95%, #fff 96%, #000 96%);
}

.ramp.pink {
    border-color: #e04ad0;
    background: linear-gradient(#000 4px, #f0a0e8 4px, #f0a0e8 6px, #9a009a 6px, #d0005c 18%, #f00 25%, #ffb400 31%, #ffff20 41%, #0f0 51%, #1a9a6a 65%, #2a2af8 84%, #b8b8b8 94%, #fff 94%, #fff 96%, #e04ad0 96%, #e04ad0 97%, #000 97%);
}

.scale ul {
    width: 34px;
    padding: 6px 0 6px 2px;
    display: flex;
    flex-direction: column;
    justify-content: space-between;
    font-size: 12px;
    font-weight: 600;
    line-height: 1px;
}

.scale li {
    display: flex;
    align-items: center;
    height: 1px;
}

.scale li::before {
    content: "";
    width: 5px;
    height: 1px;
    background: #000;
}

.scale-title {
    writing-mode: vertical-rl;
    text-align: center;
    font-weight: bold;
    line-height: 22px;
}

/* remote taskbar */
.remote-bar {
    display: flex;
    height: 39px;
    flex: none;
    gap: 3px;
    padding-top: 1px;
    background: linear-gradient(90deg, #7f92a9, #8fa3bd 60px, #a9c0de 70px, #a9c0de 1230px, #7f92a9 1280px);
    border-top: 1px solid #333;
    box-shadow: inset 0 1px 0 #dfe9f5;
}

.orb, .task, .pin {
    display: flex;
    align-items: center;
    justify-content: center;
    flex: none;
}

.remote-bar .orb {
    width: 56px;
}

.task {
    width: 59px;
    border: 1px solid #5c6f88;
    border-radius: 3px;
    background: linear-gradient(135deg, #c8d8ea, #9fb6d2);
    box-shadow: inset 0 0 0 1px #dbe7f5;
}

.task.stacked {
    width: 56px;
    margin-right: 3px;
    box-shadow: inset 0 0 0 1px #dbe7f5, 3px 0 0 #9fb6d2, 4px 0 0 #5c6f88;
}

.task.running {
    background: radial-gradient(circle at 50% 100%, #fff, #a7acde 30%, #4a4fa6);
}

.task.alert {
    background: linear-gradient(90deg, #b63a3e 18px, #b9cbe1 19px);
}

.scan {
    width: 32px;
    height: 32px;
    padding-top: 3px;
    border: 1px solid #000;
    background: #c0c0c0;
    font-size: 10px;
    line-height: 10px;
}

.preview {
    position: absolute;
    left: 232px;
    bottom: 38px;
    width: 210px;
    height: 51px;
    display: flex;
    align-items: center;
    gap: 5px;
    padding-left: 19px;
    background: #768696;
    border: 1px solid #34424f;
    box-shadow: inset 0 0 0 1px #b5c3d1;
    color: #fff;
}

.tray {
    margin-left: auto;
    display: flex;
    align-items: center;
    gap: 10px;
    color: #fff;
    font-size: 14px;
    line-height: 22px;
    text-align: center;
}

.more {
    margin-right: 8px;
}

.tray time {
    width: 82px;
    margin: 0 0 0 9px;
}

.small {
    font-size: 11px;
    line-height: 17px;
}

.small time {
    width: 66px;
    margin: 0;
}

.peek {
    width: 14px;
    height: 100%;
    border: 1px solid #8ca0c8;
    background: linear-gradient(rgba(200, 210, 230, 0.4), rgba(10, 20, 60, 0.3) 50%, transparent);
}

.small .peek {
    background: linear-gradient(#8e9aa8, #57626f 50%, #7f8b98);
}

/* host taskbar */
.taskbar {
    flex: none;
    display: flex;
    height: 48px;
    padding-left: 5px;
    border-top: 1px solid #0a1f55;
    box-shadow: inset 0 1px 0 #8ba6de;
    background: linear-gradient(90deg, #1c3873, #23428a 90px, #23438c 50%, #2c55a4 1560px, #1c3b78 1650px, #2a4681 1780px, #1d3c78);
}

.taskbar .orb {
    width: 56px;
}

.pin {
    width: 62px;
    margin-right: 8px;
}

.pin:nth-child(2) {
    margin: 0 8px 0 12px;
}

.pin:nth-child(5) {
    margin-right: 6px;
}

.pin.open {
    border: 1px solid #0a1d4c;
    border-radius: 3px;
    background: linear-gradient(120deg, #a5b3cf, #5c75a8 45%, #3d5a97);
    box-shadow: inset 0 0 0 1px #a9bade, 3px 0 0 #3d5a97, 4px 0 0 #a9bade;
}

.pointer {
    position: absolute;
    left: 960px;
    top: 540px;
}
```
FILE: plots.js
```js
// small seeded generator so the plots are stable between loads
let seed = 1318167;
function rnd() {
    seed = (seed * 1664525 + 1013904223) % 4294967296;
    return seed / 4294967296;
}
function gauss() {
    return rnd() + rnd() + rnd() - 1.5;
}

const ramp = [
    [0, 190, 190, 190], [0.13, 45, 45, 255], [0.35, 30, 150, 110], [0.5, 0, 255, 0],
    [0.6, 255, 255, 40], [0.7, 255, 190, 0], [0.77, 255, 0, 0], [1, 155, 0, 155]
];
function colour(v) {
    v = Math.max(0, Math.min(1, v));
    for (let i = 1; i < ramp.length; i++) {
        if (v <= ramp[i][0]) {
            const a = ramp[i - 1], b = ramp[i], t = (v - a[0]) / (b[0] - a[0]);
            return [a[1] + (b[1] - a[1]) * t, a[2] + (b[2] - a[2]) * t, a[3] + (b[3] - a[3]) * t];
        }
    }
}
function interp(table, x) {
    for (let i = 1; i < table.length; i++) {
        if (x <= table[i][0]) {
            const a = table[i - 1], b = table[i];
            return a[1] + (b[1] - a[1]) * (x - a[0]) / (b[0] - a[0]);
        }
    }
    return table[table.length - 1][1];
}

// each range gate is two pixels high
function heatmap(id, cell) {
    const c = document.getElementById(id), ctx = c.getContext("2d");
    const img = ctx.createImageData(c.width, c.height);
    for (let y = 0; y < c.height; y += 2) {
        const h = 5000 * (1 - y / c.height);
        for (let x = 0; x < c.width; x++) {
            const rgb = cell(x, h);
            const floor = rnd() < 0.6 ? [0, 0, 0] : [90, 255, 0];
            for (let k = 0; k < 2; k++) {
                const p = ((y + k) * c.width + x) * 4;
                const use = y + k === c.height - 1 ? floor : rgb;
                img.data[p] = use[0];
                img.data[p + 1] = use[1];
                img.data[p + 2] = use[2];
                img.data[p + 3] = 255;
            }
        }
    }
    ctx.putImageData(img, 0, 0);
}

const level = [[0, 0.59], [100, 0.61], [250, 0.665], [350, 0.65], [500, 0.62], [650, 0.6], [750, 0.57],
    [900, 0.53], [1200, 0.512], [1700, 0.5], [2500, 0.502], [3300, 0.508], [4200, 0.522], [5000, 0.55]];
const dropout = [[0, 0], [1900, 0], [2300, 0.004], [2650, 0.02], [3000, 0.08], [3500, 0.14], [4000, 0.24], [4500, 0.27], [5000, 0.2]];
heatmap("backscatter", function (x, h) {
    if (rnd() < interp(dropout, h)) return [0, 20, 0];
    const spread = h > 2000 ? (h - 2000) / 3000 * 0.06 : 0.004;
    return colour(interp(level, h) + Math.abs(gauss()) * spread - (h > 2000 && rnd() < 0.1 ? 0.02 : 0));
});

// smooth 2D noise for the low level wind structure
const lattice = [];
for (let i = 0; i < 4000; i++) lattice.push(rnd());
function smooth(x, y) {
    const xi = Math.floor(x), yi = Math.floor(y);
    let u = x - xi, v = y - yi;
    u = u * u * (3 - 2 * u);
    v = v * v * (3 - 2 * v);
    const at = (a, b) => lattice[(a + b * 61) % 4000];
    return (at(xi, yi) * (1 - u) + at(xi + 1, yi) * u) * (1 - v) + (at(xi, yi + 1) * (1 - u) + at(xi + 1, yi + 1) * u) * v;
}

const rays = [];
for (let i = 0; i < 477; i++) rays.push({ shift: gauss() * 900, bias: gauss(), green: rnd() < 0.05 });
const unlocked = [[0, 0], [1800, 0], [2200, 0.04], [2700, 0.3], [3100, 0.65], [3500, 0.9], [5000, 0.98]];
heatmap("doppler", function (x, h) {
    const ray = rays[x];
    if (rnd() < interp(unlocked, h + ray.shift - (ray.green ? 700 : 0))) {
        const r = rnd();
        const magenta = 0.3 + 0.25 * Math.max(0, Math.min(1, (h - 2000) / 1800)) + ray.bias * 0.6 - (ray.green ? 0.4 : 0);
        if (r < magenta) return [240, 0, 230];
        if (r < magenta + (h > 2900 ? 0.18 : 0.04)) return [10, 10, 10];
        return colour(ray.green ? 0.38 + rnd() * 0.18 : h < 3200 ? 0.5 + rnd() * 0.4 : 0.35 + rnd() * 0.65);
    }
    const fade = Math.min(1, h / 2500);
    const low = h < 1000 ? 1 - h / 1000 : 0;
    const wisps = (smooth(x / 45, h / 180) * 0.5 + smooth(x / 15 + 40, h / 80) * 0.5 - 0.5) * 0.2 * Math.sqrt(low);
    return colour(0.552 + fade * 0.016 + wisps + ray.bias * 0.035 * fade + gauss() * 0.05 * fade * fade - (ray.green ? 0.04 * fade : 0));
});

function grid(ctx, w, h, stepX, stepY) {
    ctx.fillStyle = "#000";
    ctx.fillRect(0, 0, w, h);
    ctx.fillStyle = "#0c360e";
    for (let x = 0; x < w; x += stepX / 4) ctx.fillRect(Math.round(x), 0, 1, h);
    for (let y = 0; y < h; y += stepY / 5) ctx.fillRect(0, Math.round(y), w, 1);
    ctx.fillStyle = "#175f1c";
    for (let x = stepX; x < w - 2; x += stepX) ctx.fillRect(Math.round(x), 0, 1, h);
    for (let y = stepY; y < h - 2; y += stepY) ctx.fillRect(0, Math.round(y), w, 1);
}

function drawAscope() {
    const c = document.getElementById("ascope"), ctx = c.getContext("2d");
    grid(ctx, c.width, c.height, 52, 24.5);
    ctx.strokeStyle = "#fff";
    ctx.lineWidth = 1.4;
    ctx.beginPath();
    ctx.moveTo(0, 96);
    ctx.lineTo(1, 96);
    ctx.lineTo(1, 6);
    ctx.lineTo(3, 0);
    ctx.moveTo(13, 0);
    for (let x = 13; x < c.width; x += 0.6) {
        const base = interp([[13, 0], [16, 30], [20, 52], [25, 75], [30, 82], [40, 88], [54, 92], [80, 95], [320, 95]], x);
        ctx.lineTo(x, base + gauss() * (x < 25 ? 1 : 4));
    }
    ctx.stroke();
    ctx.fillStyle = "#f2ec2a";
    ctx.fillRect(171, 0, 1, c.height);
}

function drawVelocity() {
    const c = document.getElementById("velocity"), ctx = c.getContext("2d");
    grid(ctx, c.width, c.height, 51.3, 26);
    ctx.fillStyle = "#fff";
    ctx.fillRect(0, 58, 1, 5);
    ctx.fillRect(1, 48, 1, 56);
    for (let x = 2; x < c.width; x++) {
        if (x < 78) {
            const s = interp([[2, 1], [40, 1.5], [50, 5], [78, 9]], x);
            ctx.fillRect(x, Math.round(47 - Math.abs(gauss()) * s), 1, Math.round(3 + rnd() * s * 1.3));
            if (x === 61 || x === 64 || x === 73 || x === 76) ctx.fillRect(x, 0, 1, 50);
            continue;
        }
        const top = rnd() < 0.15 ? 35 + rnd() * 16 : 0;
        const r = rnd();
        const bottom = r < 0.22 ? c.height : r < 0.33 ? 55 + rnd() * 35 : 49 + rnd() * 14;
        ctx.fillRect(x, Math.round(top), 1, Math.round(bottom - top));
    }
}

drawAscope();
drawVelocity();
```
